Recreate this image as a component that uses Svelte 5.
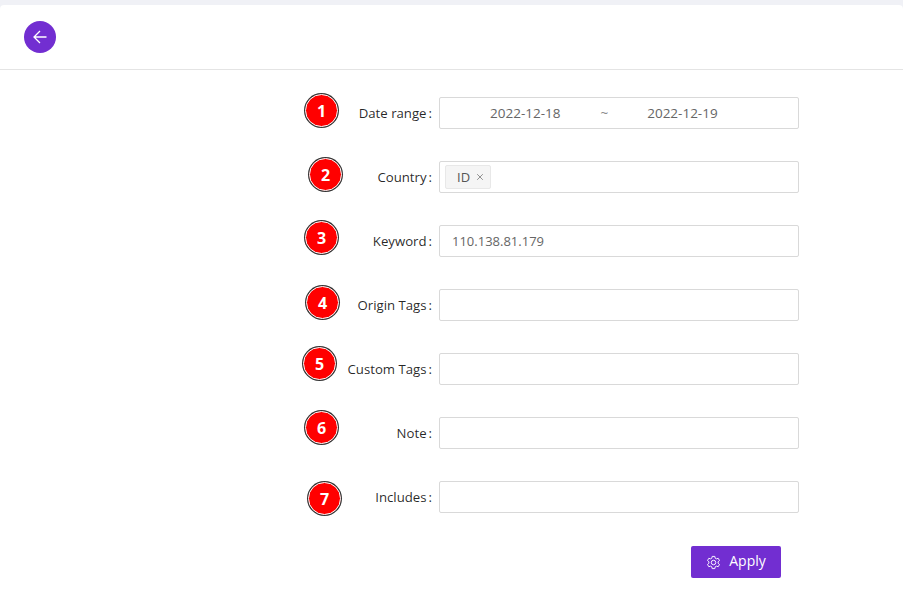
<script>
  const rows = [
    { label: 'Date range', kind: 'range' },
    { label: 'Country', kind: 'tags' },
    { label: 'Keyword', kind: 'text', value: '110.138.81.179' },
    { label: 'Origin Tags', kind: 'text', value: '' },
    { label: 'Custom Tags', kind: 'text', value: '' },
    { label: 'Note', kind: 'text', value: '' },
    { label: 'Includes', kind: 'text', value: '' },
  ]

  // annotation markers drawn over the screenshot
  const marks = [
    { n: 1, x: 322, y: 111 },
    { n: 2, x: 326, y: 175 },
    { n: 3, x: 322, y: 238 },
    { n: 4, x: 323, y: 303 },
    { n: 5, x: 320, y: 364 },
    { n: 6, x: 322, y: 428 },
    { n: 7, x: 325, y: 499 },
  ]
</script>

<div class="page">
  <header class="top">
    <button class="back" aria-label="Back">
      <svg viewBox="0 0 16 16" width="16" height="16" fill="none" stroke="#fff" stroke-width="1.3">
        <path d="M14.5 8H2M8 2 2 8l6 6" />
      </svg>
    </button>
  </header>

  <form class="form">
    {#each rows as r}
      <div class="row">
        <span class="label">{r.label}<i>:</i></span>
        {#if r.kind === 'range'}
          <div class="box range">
            <span>2022-12-18</span>
            <span class="tilde">~</span>
            <span>2022-12-19</span>
          </div>
        {:else if r.kind === 'tags'}
          <div class="box tags">
            <span class="tag">ID <svg viewBox="0 0 10 10" width="8" height="8" stroke="#777" stroke-width="1"><path d="M1.5 1.5l7 7M8.5 1.5l-7 7" /></svg></span>
          </div>
        {:else}
          <input class="box text" value={r.value} />
        {/if}
      </div>
    {/each}
    <div class="actions">
      <button type="button" class="apply">
        <svg viewBox="0 0 16 16" width="15" height="15" fill="none" stroke="#fff" stroke-width="1">
          <path d="M6.6 1.5h2.8l.4 1.9 1.3.7 1.9-.6 1.4 2.4-1.5 1.3v1.6l1.5 1.3-1.4 2.4-1.9-.6-1.3.7-.4 1.9H6.6l-.4-1.9-1.3-.7-1.9.6-1.4-2.4L3.1 8.8V7.2L1.6 5.9 3 3.5l1.9.6 1.3-.7z" />
          <circle cx="8" cy="8" r="2.4" />
        </svg>
        <span class="apply-text">Apply</span>
      </button>
    </div>
  </form>

  {#each marks as m}
    <span class="mark" style="left: {m.x}px; top: {m.y}px">{m.n}</span>
  {/each}
</div>

<style>
  :global(body) {
    margin: 0;
    background: #fff;
  }
  .page {
    position: relative;
    width: 903px;
    height: 610px;
    overflow: hidden;
    background: #f0f1f6;
    padding-top: 5px;
    box-sizing: border-box;
    font-family: "Open Sans", "Noto Sans", sans-serif;
    font-size: 13px;
    color: rgba(0, 0, 0, 0.85);
  }
  .top {
    height: 64px;
    background: #fff;
    border-bottom: 1px solid #e4e4e4;
    border-radius: 4px 4px 0 0;
    display: flex;
    align-items: center;
    padding-left: 24px;
  }
  .back {
    width: 32px;
    height: 32px;
    border: 0;
    border-radius: 50%;
    background: #722ed1;
    padding: 0;
    display: flex;
    align-items: center;
    justify-content: center;
  }
  .form {
    background: #fff;
    height: 540px;
    padding-top: 27px;
    padding-left: 439px;
    box-sizing: border-box;
    display: flex;
    flex-direction: column;
    gap: 32px;
  }
  .row {
    position: relative;
    width: 360px;
    height: 32px;
  }
  .label {
    position: absolute;
    right: 100%;
    top: 0;
    font-size: 13.2px;
    line-height: 32px;
    white-space: nowrap;
    padding-right: 7px;
  }
  .label i {
    font-style: normal;
    margin-left: 2px;
  }
  .box {
    width: 100%;
    height: 32px;
    box-sizing: border-box;
    border: 1px solid #d9d9d9;
    border-radius: 2px;
    background: #fff;
    color: #666;
    font: inherit;
  }
  .text {
    display: block;
    padding: 0 12px;
    outline: none;
  }
  .range {
    display: flex;
    align-items: center;
    padding-left: 50px;
    line-height: 30px;
    font-size: 13.5px;
  }
  .tilde {
    margin: 0 39px 0 40px;
    color: #888;
  }
  .tags {
    display: flex;
    align-items: center;
    padding-left: 5px;
  }
  .tag {
    height: 24px;
    box-sizing: border-box;
    padding: 0 6px 0 11px;
    display: flex;
    align-items: center;
    gap: 6px;
    background: #f5f5f5;
    border: 1px solid #e8e8e8;
    border-radius: 2px;
    color: #555;
  }
  .actions {
    margin-top: 1px;
    padding-left: 252px;
  }
  .apply {
    width: 90px;
    height: 32px;
    border: 0;
    border-radius: 2px;
    background: #722ed1;
    color: #fff;
    font: inherit;
    font-size: 14px;
    display: flex;
    align-items: center;
    justify-content: center;
    gap: 8px;
    padding: 0;
  }
  .apply-text {
    padding-bottom: 3px;
  }
  .mark {
    position: absolute;
    width: 31px;
    height: 31px;
    margin: -17px 0 0 -17px;
    box-sizing: content-box;
    border-radius: 50%;
    background: #f00;
    border: 1px solid #fff;
    box-shadow: 0 0 0 1px #333;
    color: #fff;
    font-family: "Open Sans", sans-serif;
    font-weight: 700;
    font-size: 16px;
    line-height: 33px;
    text-align: center;
  }
</style>
